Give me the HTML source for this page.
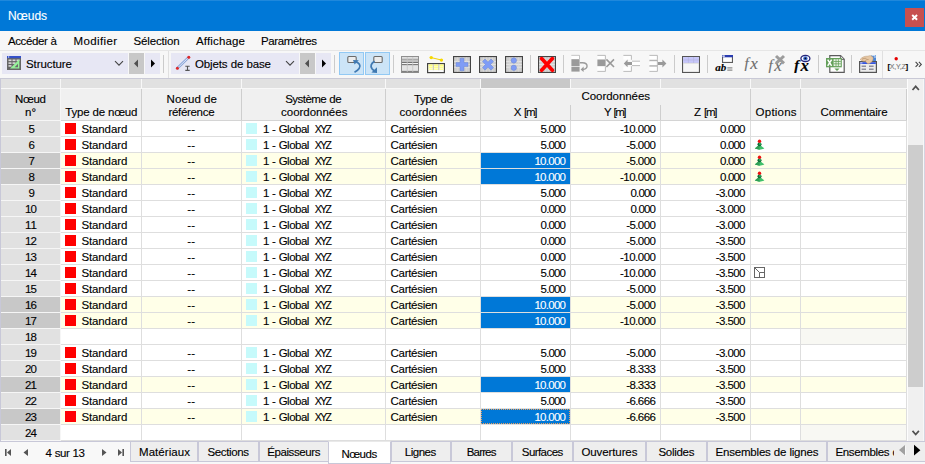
<!DOCTYPE html>
<html lang="fr"><head><meta charset="utf-8"><title>Nœuds</title>
<style>
html,body{margin:0;padding:0}
body{width:925px;height:464px;position:relative;overflow:hidden;background:#f0f0f0;font-family:"Liberation Sans",sans-serif;font-size:11.5px;color:#000}
.r{position:absolute;display:block}
.t{position:absolute;white-space:nowrap;line-height:15px;height:15px;-webkit-text-stroke:0.12px currentColor}
</style></head><body>
<div class="r" style="left:0px;top:0px;width:925px;height:31px;background:#0078d7"></div>
<div class="r" style="left:0px;top:0px;width:925px;height:1px;background:#1f88dc"></div>
<span class="t" style="left:8.00px;top:8.84px;letter-spacing:-0.078px;color:#fff;font-size:12px">Nœuds</span>
<div class="r" style="left:905px;top:8px;width:19px;height:19px;background:#c75050"></div>
<svg class="r" style="left:911px;top:14px" width="8" height="8" viewBox="0 0 8 8"><path d="M1.2 1 L6.1 5.8 M6.1 1 L1.2 5.8" stroke="#fff" stroke-width="1.9" fill="none"/></svg>
<div class="r" style="left:0px;top:31px;width:925px;height:19px;background:#f7f7f7"></div>
<span class="t" style="left:8.00px;top:33.52px;letter-spacing:-0.402px;word-spacing:0.402px">Accéder à</span>
<span class="t" style="left:73.60px;top:33.52px;letter-spacing:0.361px">Modifier</span>
<span class="t" style="left:133.60px;top:33.52px;letter-spacing:-0.164px">Sélection</span>
<span class="t" style="left:196.00px;top:33.52px;letter-spacing:0.156px">Affichage</span>
<span class="t" style="left:261.00px;top:33.52px;letter-spacing:-0.382px">Paramètres</span>
<div class="r" style="left:0px;top:50px;width:925px;height:1px;background:#e6e6e6"></div>
<div class="r" style="left:0px;top:51px;width:925px;height:27px;background:#f7f7f7"></div>
<div class="r" style="left:0px;top:78px;width:925px;height:1px;background:#c9c9d6"></div>
<div class="r" style="left:168px;top:51px;width:1px;height:27px;background:#e0e0e0"></div>
<div class="r" style="left:882px;top:51px;width:1px;height:27px;background:#e0e0e0"></div>
<div class="r" style="left:2px;top:53px;width:126px;height:21px;background:#e7e7f4"></div>
<div class="r" style="left:129px;top:53px;width:15px;height:21px;background:#c8c8c8"></div>
<div class="r" style="left:145px;top:53px;width:15px;height:21px;background:#e7e7f4"></div>
<svg class="r" style="left:114px;top:60px" width="10" height="7" viewBox="0 0 10 7"><path d="M1 1.2 L5 5.2 L9 1.2" stroke="#444" stroke-width="1.1" fill="none"/></svg>
<svg class="r" style="left:133px;top:59px" width="6" height="9" viewBox="0 0 6 9"><path d="M5 0.5 L1 4.5 L5 8.5 Z" fill="#505050"/></svg>
<svg class="r" style="left:150px;top:59px" width="6" height="9" viewBox="0 0 6 9"><path d="M1 0.5 L5 4.5 L1 8.5 Z" fill="#000"/></svg>
<div class="r" style="left:171px;top:53px;width:128px;height:21px;background:#e7e7f4"></div>
<div class="r" style="left:300px;top:53px;width:15px;height:21px;background:#c8c8c8"></div>
<div class="r" style="left:316px;top:53px;width:15px;height:21px;background:#e7e7f4"></div>
<svg class="r" style="left:285px;top:60px" width="10" height="7" viewBox="0 0 10 7"><path d="M1 1.2 L5 5.2 L9 1.2" stroke="#444" stroke-width="1.1" fill="none"/></svg>
<svg class="r" style="left:304px;top:59px" width="6" height="9" viewBox="0 0 6 9"><path d="M5 0.5 L1 4.5 L5 8.5 Z" fill="#505050"/></svg>
<svg class="r" style="left:321px;top:59px" width="6" height="9" viewBox="0 0 6 9"><path d="M1 0.5 L5 4.5 L1 8.5 Z" fill="#000"/></svg>
<span class="t" style="left:26.00px;top:56.52px;letter-spacing:-0.086px">Structure</span>
<span class="t" style="left:195.00px;top:56.52px;letter-spacing:-0.125px;word-spacing:0.125px">Objets de base</span>
<div class="r" style="left:163px;top:55px;width:1px;height:18px;background:#cbcbcb"></div>
<div class="r" style="left:334px;top:55px;width:1px;height:18px;background:#cbcbcb"></div>
<div class="r" style="left:393px;top:55px;width:1px;height:18px;background:#cbcbcb"></div>
<div class="r" style="left:530px;top:55px;width:1px;height:18px;background:#cbcbcb"></div>
<div class="r" style="left:563px;top:55px;width:1px;height:18px;background:#cbcbcb"></div>
<div class="r" style="left:674px;top:55px;width:1px;height:18px;background:#cbcbcb"></div>
<div class="r" style="left:707px;top:55px;width:1px;height:18px;background:#cbcbcb"></div>
<div class="r" style="left:818px;top:55px;width:1px;height:18px;background:#cbcbcb"></div>
<div class="r" style="left:851px;top:55px;width:1px;height:18px;background:#cbcbcb"></div>
<svg class="r" style="left:7px;top:56px" width="14" height="14" viewBox="0 0 14 14"><rect x="0" y="0" width="14" height="14" fill="#666"/><rect x="0" y="0" width="14" height="2.2" fill="#3450c8"/><rect x="1" y="0.4" width="1.2" height="1.2" fill="#dfe4f8"/><g fill="#d8d8d8"><rect x="1.5" y="3.5" width="3" height="1.6"/><rect x="5.5" y="3.5" width="3" height="1.6"/><rect x="9.5" y="3.5" width="3" height="1.6"/><rect x="1.5" y="6.3" width="3" height="1.6"/><rect x="5.5" y="6.3" width="3" height="1.6"/><rect x="1.5" y="9.1" width="3" height="1.6"/></g><path d="M12.4 3.2 L12.4 12.6 L3 12.6 Z" fill="#96f29a"/><path d="M11 7.8 L11 11.3 L7.6 11.3 Z" fill="#6c6c6c"/></svg>
<svg class="r" style="left:175px;top:55px" width="18" height="17" viewBox="0 0 18 17"><path d="M2.6 13 L13.6 2.4" stroke="#8aa4d8" stroke-width="2.6" stroke-linecap="round"/><path d="M2.6 13 L13.6 2.4" stroke="#dfe8f8" stroke-width="1" stroke-linecap="round"/><circle cx="2.4" cy="13.2" r="1.5" fill="#e02828"/><circle cx="13.8" cy="2.3" r="1.5" fill="#e02828"/><path d="M10.3 11.3 H14.7 M10.3 15.4 H14.7 M12.5 11.3 V15.4" stroke="#555" stroke-width="1.1" fill="none"/></svg>
<div class="r" style="left:339px;top:52px;width:25px;height:23px;box-sizing:border-box;background:#cce4f7;border:1px solid #92c9f4"></div>
<div class="r" style="left:365px;top:52px;width:25px;height:23px;box-sizing:border-box;background:#cce4f7;border:1px solid #92c9f4"></div>
<svg class="r" style="left:339px;top:52px" width="25" height="23" viewBox="0 0 25 23"><rect x="8.8" y="4.5" width="8.4" height="6" rx="1" fill="#ececec" stroke="#6a6a6a" stroke-width="1.1"/><path d="M15.5 20.3 C19.5 18.2 22.2 15 20.4 12.2 C19.5 10.8 18 10 16.6 9.6" stroke="#3f79b2" stroke-width="1.7" fill="none"/><path d="M14 8 L19.8 8.2 L15.6 12.6 Z" fill="#3f79b2"/></svg>
<svg class="r" style="left:365px;top:52px" width="25" height="23" viewBox="0 0 25 23"><rect x="8.8" y="4.5" width="8.4" height="6" rx="1" fill="#ececec" stroke="#6a6a6a" stroke-width="1.1"/><path d="M9.6 9.3 C6.2 11.2 5 14 7 16.8 C7.6 17.6 8.4 18.4 9.4 19" stroke="#3f79b2" stroke-width="1.8" fill="none"/><path d="M12 15.2 L12 21 L6.4 20.6 Z" fill="#3f79b2"/></svg>
<svg class="r" style="left:401px;top:56px" width="18" height="17" viewBox="0 0 18 17"><rect x="0" y="0" width="18" height="17" fill="#c4c4c4"/><rect x="0.5" y="0.5" width="17" height="16" fill="none" stroke="#8e8e8e" stroke-width="1"/><rect x="1" y="1" width="4.8" height="1.8" fill="#dedede"/><rect x="1" y="2.8" width="4.8" height="1.8" fill="#a8a8a8"/><rect x="1" y="4.6" width="4.8" height="1.2" fill="#d8d8d8"/><rect x="1" y="5.8" width="4.8" height="1.2" fill="#727272"/><rect x="1" y="7" width="4.8" height="1.1" fill="#f4f4f4"/><rect x="1" y="8.1" width="4.8" height="1.2" fill="#727272"/><rect x="1" y="9.3" width="4.8" height="5.6" fill="#e4e4e4"/><rect x="1" y="14.9" width="4.8" height="1.3" fill="#808080"/><rect x="6.6" y="1" width="4.8" height="1.8" fill="#dedede"/><rect x="6.6" y="2.8" width="4.8" height="1.8" fill="#a8a8a8"/><rect x="6.6" y="4.6" width="4.8" height="1.2" fill="#d8d8d8"/><rect x="6.6" y="5.8" width="4.8" height="1.2" fill="#727272"/><rect x="6.6" y="7" width="4.8" height="1.1" fill="#f4f4f4"/><rect x="6.6" y="8.1" width="4.8" height="1.2" fill="#727272"/><rect x="6.6" y="9.3" width="4.8" height="5.6" fill="#e4e4e4"/><rect x="6.6" y="14.9" width="4.8" height="1.3" fill="#808080"/><rect x="12.2" y="1" width="4.8" height="1.8" fill="#dedede"/><rect x="12.2" y="2.8" width="4.8" height="1.8" fill="#a8a8a8"/><rect x="12.2" y="4.6" width="4.8" height="1.2" fill="#d8d8d8"/><rect x="12.2" y="5.8" width="4.8" height="1.2" fill="#727272"/><rect x="12.2" y="7" width="4.8" height="1.1" fill="#f4f4f4"/><rect x="12.2" y="8.1" width="4.8" height="1.2" fill="#727272"/><rect x="12.2" y="9.3" width="4.8" height="5.6" fill="#e4e4e4"/><rect x="12.2" y="14.9" width="4.8" height="1.3" fill="#808080"/></svg>
<svg class="r" style="left:427px;top:55px" width="18" height="19" viewBox="0 0 18 19"><path d="M4.2 2.6 L14.4 5" stroke="#f2d200" stroke-width="1"/><circle cx="4.2" cy="2.6" r="1.7" fill="#f6d800"/><circle cx="14.4" cy="5.1" r="1.7" fill="#f6d800"/><rect x="0.6" y="8.6" width="16.8" height="9" fill="#fafafa" stroke="#444" stroke-width="1.2"/><rect x="1.6" y="9.5" width="4" height="1.4" fill="#ffff70"/><rect x="1.6" y="11.4" width="4" height="1.6" fill="#ffff8c"/><rect x="1.6" y="13.4" width="4" height="1.6" fill="#ffffa0"/><rect x="7.1" y="9.5" width="4" height="1.4" fill="#ffff70"/><rect x="7.1" y="11.4" width="4" height="1.6" fill="#ffff8c"/><rect x="7.1" y="13.4" width="4" height="1.6" fill="#ffffa0"/><rect x="12.6" y="9.5" width="4" height="1.4" fill="#ffff70"/><rect x="12.6" y="11.4" width="4" height="1.6" fill="#ffff8c"/><rect x="12.6" y="13.4" width="4" height="1.6" fill="#ffffa0"/><path d="M6.3 9.4 V15.2 M11.8 9.4 V15.2" stroke="#b8b8a0" stroke-width="0.8"/></svg>
<svg class="r" style="left:453px;top:56px" width="18" height="17" viewBox="0 0 18 17"><rect x="0.55" y="0.55" width="16.9" height="15.9" fill="#cfcfcf" stroke="#444" stroke-width="1.1"/><path d="M1.2 5.6 H16.8 M1.2 8.4 H16.8 M1.2 11.2 H16.8" stroke="#e6e6e6" stroke-width="0.9"/><path d="M4.5 1.2 V15.8 M7.5 1.2 V15.8 M10.5 1.2 V15.8 M13.5 1.2 V15.8" stroke="#dadada" stroke-width="0.6"/><path d="M7 2.2 H11 V6.6 H15 V10.6 H11 V14.8 H7 V10.6 H3 V6.6 H7 Z" fill="#7f9cf6" stroke="#6d86cc" stroke-width="0.5"/></svg>
<svg class="r" style="left:479px;top:56px" width="18" height="17" viewBox="0 0 18 17"><rect x="0.55" y="0.55" width="16.9" height="15.9" fill="#cfcfcf" stroke="#444" stroke-width="1.1"/><path d="M1.2 5.6 H16.8 M1.2 8.4 H16.8 M1.2 11.2 H16.8" stroke="#e6e6e6" stroke-width="0.9"/><path d="M4.5 1.2 V15.8 M7.5 1.2 V15.8 M10.5 1.2 V15.8 M13.5 1.2 V15.8" stroke="#dadada" stroke-width="0.6"/><path d="M9 6.1 L12 3 L14.6 5.6 L11.6 8.6 L14.6 11.6 L12 14.2 L9 11.2 L6 14.2 L3.4 11.6 L6.4 8.6 L3.4 5.6 L6 3 Z" fill="#7f9cf6" stroke="#6d86cc" stroke-width="0.5"/></svg>
<svg class="r" style="left:505px;top:56px" width="18" height="17" viewBox="0 0 18 17"><rect x="0.55" y="0.55" width="16.9" height="15.9" fill="#cfcfcf" stroke="#444" stroke-width="1.1"/><path d="M1.2 5.6 H16.8 M1.2 8.4 H16.8 M1.2 11.2 H16.8" stroke="#e6e6e6" stroke-width="0.9"/><path d="M4.5 1.2 V15.8 M7.5 1.2 V15.8 M10.5 1.2 V15.8 M13.5 1.2 V15.8" stroke="#dadada" stroke-width="0.6"/><circle cx="8.8" cy="4.5" r="2.7" fill="#7f9cf6" stroke="#6d86cc" stroke-width="0.5"/><circle cx="8.8" cy="11.8" r="2.7" fill="#7f9cf6" stroke="#6d86cc" stroke-width="0.5"/></svg>
<svg class="r" style="left:538px;top:56px" width="18" height="17" viewBox="0 0 18 17"><rect x="0.55" y="0.55" width="16.9" height="15.9" fill="#cfcfcf" stroke="#444" stroke-width="1.1"/><path d="M1.2 5.6 H16.8 M1.2 8.4 H16.8 M1.2 11.2 H16.8" stroke="#e6e6e6" stroke-width="0.9"/><path d="M4.5 1.2 V15.8 M7.5 1.2 V15.8 M10.5 1.2 V15.8 M13.5 1.2 V15.8" stroke="#dadada" stroke-width="0.6"/><path d="M3.6 2.6 L14.4 14.2 M14.4 2.6 L3.6 14.2" stroke="#ff0000" stroke-width="3.7" stroke-linecap="round"/></svg>
<svg class="r" style="left:571px;top:54px" width="18" height="19" viewBox="0 0 18 19"><path d="M0.4 1.4 H8.4 V5" stroke="#b4b4b4" fill="#fff" stroke-width="0.9"/><rect x="0.4" y="1.8" width="7.6" height="3.4" fill="#fff"/><rect x="0.4" y="5.2" width="8.2" height="7" fill="#9a9a9a"/><rect x="0.4" y="12.9" width="8.2" height="4.7" fill="#9a9a9a"/><path d="M8.8 8.7 H11.5 C17.5 8.7 17.5 15.4 12 15.4" stroke="#9a9a9a" stroke-width="1.4" fill="none"/><path d="M12.6 12.6 L9.6 15.4 L12.6 18 Z" fill="#9a9a9a"/></svg>
<svg class="r" style="left:597px;top:54px" width="18" height="19" viewBox="0 0 18 19"><rect x="0.4" y="1.8" width="7.8" height="3.6" fill="#fff"/><path d="M0.4 1.4 H8.4 V5.4" stroke="#b4b4b4" fill="none" stroke-width="0.9"/><rect x="0.4" y="5.5" width="8.2" height="6.6" fill="#9a9a9a"/><rect x="0.4" y="12.8" width="7.8" height="4.2" fill="#fff"/><path d="M8.4 12.4 V17.4 H0.4" stroke="#b4b4b4" fill="none" stroke-width="0.9"/><path d="M9.4 5.4 L17 13 M17 5.4 L9.4 13" stroke="#9a9a9a" stroke-width="1.6"/></svg>
<svg class="r" style="left:623px;top:54px" width="18" height="19" viewBox="0 0 18 19"><rect x="0.4" y="1.8" width="7.8" height="3.8" fill="#fff"/><path d="M0.4 1.4 H8.4 V5.8" stroke="#b4b4b4" fill="none" stroke-width="0.9"/><rect x="0.4" y="12.6" width="7.8" height="4.4" fill="#fff"/><path d="M8.4 12.2 V17.4 H0.4" stroke="#b4b4b4" fill="none" stroke-width="0.9"/><rect x="9" y="7.4" width="8" height="4" fill="#fff"/><path d="M9 7.2 H17 M9 11.6 H17" stroke="#b4b4b4" stroke-width="0.9"/><path d="M0.8 9.4 L4.6 5.6 V7.9 H9 V10.9 H4.6 V13.2 Z" fill="#9a9a9a"/></svg>
<svg class="r" style="left:649px;top:54px" width="18" height="19" viewBox="0 0 18 19"><rect x="0.4" y="1.8" width="7.8" height="3.6" fill="#fff"/><path d="M0.4 1.4 H8.4 V5.4" stroke="#b4b4b4" fill="none" stroke-width="0.9"/><rect x="0.4" y="5.8" width="8" height="1.6" fill="#b4b4b4"/><rect x="0.4" y="7.4" width="8" height="3.8" fill="#fff"/><rect x="0.4" y="11.2" width="8" height="1.6" fill="#b4b4b4"/><rect x="0.4" y="12.8" width="7.8" height="4.2" fill="#fff"/><path d="M8.4 12.8 V17.4 H0.4 M8.4 5.4 V12.8" stroke="#b4b4b4" fill="none" stroke-width="0.9"/><path d="M17.4 9.4 L13.4 5.4 V7.9 H9 V10.9 H13.4 V13.4 Z" fill="#9a9a9a"/></svg>
<svg class="r" style="left:682px;top:56px" width="18" height="17" viewBox="0 0 18 17"><rect x="0.55" y="0.55" width="16.9" height="15.9" fill="#f6f6f6" stroke="#555" stroke-width="1.1"/><rect x="1.1" y="1.1" width="15.8" height="5.9" fill="#c6c6fb"/><path d="M1.1 4 H16.9 M6.4 1.1 V7 M11.6 1.1 V7" stroke="#b4b4e0" stroke-width="0.7"/><path d="M1.1 7.2 H16.9" stroke="#c8c8c8" stroke-width="0.6"/></svg>
<svg class="r" style="left:722px;top:55px" width="11" height="8" viewBox="0 0 11 8"><rect x="0.5" y="0.5" width="10" height="7" fill="#fff" stroke="#5c5c5c" stroke-width="1.2"/><rect x="0" y="0" width="11" height="2.3" fill="#2a3cb0"/><rect x="0.4" y="0.3" width="2.4" height="1.7" fill="#c8cce8"/></svg>
<span class="t" style="left:715.3px;top:60.4px;font:italic bold 11px 'Liberation Serif',serif;letter-spacing:0px;line-height:15px">ab</span>
<svg class="r" style="left:727px;top:67px" width="6" height="4" viewBox="0 0 6 4"><path d="M0.3 0.9 H5.4 M0.3 3.1 H5.4" stroke="#8c8c8c" stroke-width="1.1"/></svg>
<span class="t" style="left:744.4px;top:53.13px;font:italic 15px 'Liberation Serif',serif;color:#6c6c6c;line-height:20px;height:20px">f</span><span class="t" style="left:750.3px;top:53.80px;font:italic 17px 'Liberation Serif',serif;color:#6c6c6c;line-height:20px;height:20px">x</span>
<span class="t" style="left:768.4px;top:55.03px;font:italic 15px 'Liberation Serif',serif;color:#6c6c6c;line-height:20px;height:20px">f</span><span class="t" style="left:774.3px;top:55.70px;font:italic 17px 'Liberation Serif',serif;color:#6c6c6c;line-height:20px;height:20px">x</span>
<svg class="r" style="left:774px;top:54px" width="12" height="11" viewBox="0 0 12 11"><path d="M2 2 L10 9.4 M10 2 L2 9.4" stroke="#9c9c9c" stroke-width="3"/></svg>
<span class="t" style="left:794.3px;top:55.03px;font:italic bold 15px 'Liberation Serif',serif;color:#000;line-height:20px;height:20px">f</span><span class="t" style="left:800.6px;top:55.70px;font:italic bold 17px 'Liberation Serif',serif;color:#000;line-height:20px;height:20px">x</span>
<svg class="r" style="left:800px;top:54px" width="11" height="9" viewBox="0 0 11 9"><ellipse cx="5.4" cy="4.5" rx="4.5" ry="3.1" fill="#fff" stroke="#25257a" stroke-width="1.3"/><circle cx="5.4" cy="4.4" r="2.2" fill="#3a6cd0"/><circle cx="5.4" cy="4.4" r="0.9" fill="#05051a"/></svg>
<svg class="r" style="left:826px;top:55px" width="19" height="18" viewBox="0 0 19 18"><path d="M3.8 0.6 H14.6 L18.2 4.2 V17.4 H3.8 Z" fill="#fdfdfd" stroke="#5a5a5a" stroke-width="1.2"/><path d="M14.4 0.8 V4.4 H18" stroke="#5a5a5a" stroke-width="0.9" fill="#e4e4e4"/><rect x="0" y="3" width="15.8" height="9.3" fill="#64a05a"/><path d="M1.7 4.6 L5.6 10.8 M5.6 4.6 L1.7 10.8" stroke="#fff" stroke-width="1.5"/><rect x="7.6" y="4.2" width="7.2" height="6.9" fill="#e8f2e4"/><path d="M7.6 6.5 H14.8 M7.6 8.8 H14.8 M10 4.2 V11.1 M12.4 4.2 V11.1" stroke="#64a05a" stroke-width="0.8"/><path d="M8.4 13.4 H13.6 L11 16 Z" fill="#64a05a"/></svg>
<svg class="r" style="left:859px;top:54px" width="19" height="19" viewBox="0 0 19 19"><path d="M12 1.2 H17 V8 H12 Z" fill="#4a86d8"/><path d="M12.4 1.6 H16 V4" stroke="#cfe0f6" stroke-width="1" fill="none"/><rect x="0.6" y="7.6" width="16.8" height="10.8" fill="#ececec" stroke="#555" stroke-width="1.2"/><rect x="1.2" y="8.2" width="15.6" height="1.8" fill="#3454e0"/><rect x="1.4" y="8.4" width="2" height="1" fill="#e8e8f8"/><path d="M2.6 12.3 H7 M2.6 15.2 H7 M10 12.3 H14.6 M10 15.2 H14.6" stroke="#8f8f9c" stroke-width="1.4"/><path d="M1.2 5.4 C3 3 6 2 9 2.2 C10.6 1.2 12.8 1.6 14 3.2 C14.6 5.2 13.6 7.6 11.6 8.8 C10.2 9.8 8.8 10 8 9.2 L6.6 7.2 C4.6 7.4 2.6 7 1.2 5.4 Z" fill="#e6c7a4" stroke="#b8926a" stroke-width="0.5"/><path d="M3 5.2 C4.6 4.4 6 4.2 7.4 4.4 M6.4 6.4 C7.4 5.6 8.6 5.4 9.6 5.6" stroke="#a88058" stroke-width="0.6" fill="none"/></svg>
<svg class="r" style="left:893px;top:56px" width="6" height="6" viewBox="0 0 6 6"><circle cx="3.2" cy="2.8" r="1.7" fill="#e60000"/></svg>
<span class="t" style="left:887.4px;top:59.9px;font-size:7px;line-height:14px;letter-spacing:-0.2px;color:#777"><b style="color:#000;font-size:8px">[</b>X,Y,Z<b style="color:#000;font-size:8px">]</b></span>
<svg class="r" style="left:915px;top:61px" width="8" height="7" viewBox="0 0 8 7"><path d="M0.6 0.9 L3 3.4 L0.6 5.9 M3.9 0.9 L6.3 3.4 L3.9 5.9" stroke="#444" stroke-width="1.1" fill="none"/></svg>
<div class="r" style="left:0px;top:79px;width:925px;height:362px;background:#fff"></div>
<div class="r" style="left:0px;top:79px;width:1px;height:362px;background:#c8c8d8"></div>
<div class="r" style="left:1px;top:79px;width:59px;height:9px;background:#e1e1e1"></div>
<div class="r" style="left:61px;top:79px;width:80px;height:9px;background:#e1e1e1"></div>
<div class="r" style="left:142px;top:79px;width:99px;height:9px;background:#e1e1e1"></div>
<div class="r" style="left:242px;top:79px;width:143px;height:9px;background:#e1e1e1"></div>
<div class="r" style="left:386px;top:79px;width:94px;height:9px;background:#e1e1e1"></div>
<div class="r" style="left:481px;top:79px;width:89px;height:9px;background:#c8c8c8"></div>
<div class="r" style="left:571px;top:79px;width:89px;height:9px;background:#e1e1e1"></div>
<div class="r" style="left:661px;top:79px;width:89px;height:9px;background:#e1e1e1"></div>
<div class="r" style="left:751px;top:79px;width:49px;height:9px;background:#e1e1e1"></div>
<div class="r" style="left:801px;top:79px;width:106px;height:9px;background:#e1e1e1"></div>
<div class="r" style="left:1px;top:89px;width:59px;height:31px;background:#e1e1e1"></div>
<div class="r" style="left:61px;top:89px;width:845px;height:31px;background:#f0f0f0"></div>
<span class="t" style="left:15.00px;top:92.02px;letter-spacing:-0.312px">Nœud</span>
<span class="t" style="left:25.00px;top:105.02px;letter-spacing:0.000px">n°</span>
<span class="t" style="left:65.30px;top:105.02px;letter-spacing:-0.225px;word-spacing:0.225px">Type de nœud</span>
<span class="t" style="left:166.50px;top:92.02px;letter-spacing:0.104px;word-spacing:-0.104px">Noeud de</span>
<span class="t" style="left:168.50px;top:105.02px;letter-spacing:-0.320px">référence</span>
<span class="t" style="left:285.20px;top:92.02px;letter-spacing:-0.544px;word-spacing:0.544px">Système de</span>
<span class="t" style="left:281.00px;top:105.02px;letter-spacing:-0.010px">coordonnées</span>
<span class="t" style="left:414.00px;top:92.02px;letter-spacing:-0.408px;word-spacing:0.408px">Type de</span>
<span class="t" style="left:399.40px;top:105.02px;letter-spacing:0.080px">coordonnées</span>
<span class="t" style="left:581.50px;top:89.02px;letter-spacing:-0.056px">Coordonnées</span>
<span class="t" style="left:513.80px;top:105.02px;letter-spacing:0.000px">X</span>
<span class="t" style="left:524.00px;top:105.02px;letter-spacing:-1.300px">[m]</span>
<span class="t" style="left:603.90px;top:105.02px;letter-spacing:0.000px">Y</span>
<span class="t" style="left:613.60px;top:105.02px;letter-spacing:-1.550px">[m]</span>
<span class="t" style="left:694.00px;top:105.02px;letter-spacing:0.000px">Z</span>
<span class="t" style="left:704.00px;top:105.02px;letter-spacing:-1.250px">[m]</span>
<span class="t" style="left:755.60px;top:105.02px;letter-spacing:0.229px">Options</span>
<span class="t" style="left:820.60px;top:105.02px;letter-spacing:-0.200px">Commentaire</span>
<div class="r" style="left:1px;top:121px;width:59px;height:15px;background:#e1e1e1"></div>
<div class="r" style="left:61px;top:136px;width:845px;height:1px;background:#dedede"></div>
<span class="t" style="left:28.40px;top:121.52px;letter-spacing:0.000px">5</span>
<div class="r" style="left:65px;top:123px;width:11px;height:11px;background:#ff0000"></div>
<span class="t" style="left:81.40px;top:121.52px;letter-spacing:-0.113px">Standard</span>
<span class="t" style="left:187.30px;top:121.52px;letter-spacing:0.012px">--</span>
<div class="r" style="left:246px;top:123px;width:11px;height:11px;background:#c6fafb"></div>
<span class="t" style="left:262.90px;top:121.52px;letter-spacing:0.000px">1</span>
<span class="t" style="left:271.90px;top:121.52px;letter-spacing:0.000px">-</span>
<span class="t" style="left:278.70px;top:121.52px;letter-spacing:-0.510px">Global</span>
<span class="t" style="left:314.80px;top:121.86px;letter-spacing:-1.619px;font-size:10.5px">XYZ</span>
<span class="t" style="left:390.50px;top:121.52px;letter-spacing:-0.286px">Cartésien</span>
<span class="t" style="left:540.60px;top:121.52px;letter-spacing:-0.838px">5.000</span>
<span class="t" style="left:620.00px;top:121.52px;letter-spacing:-0.517px">-10.000</span>
<span class="t" style="left:720.10px;top:121.52px;letter-spacing:-0.838px">0.000</span>
<div class="r" style="left:1px;top:137px;width:59px;height:15px;background:#e1e1e1"></div>
<div class="r" style="left:61px;top:152px;width:845px;height:1px;background:#dedede"></div>
<span class="t" style="left:28.40px;top:137.52px;letter-spacing:0.000px">6</span>
<div class="r" style="left:65px;top:139px;width:11px;height:11px;background:#ff0000"></div>
<span class="t" style="left:81.40px;top:137.52px;letter-spacing:-0.113px">Standard</span>
<span class="t" style="left:187.30px;top:137.52px;letter-spacing:0.012px">--</span>
<div class="r" style="left:246px;top:139px;width:11px;height:11px;background:#c6fafb"></div>
<span class="t" style="left:262.90px;top:137.52px;letter-spacing:0.000px">1</span>
<span class="t" style="left:271.90px;top:137.52px;letter-spacing:0.000px">-</span>
<span class="t" style="left:278.70px;top:137.52px;letter-spacing:-0.510px">Global</span>
<span class="t" style="left:314.80px;top:137.86px;letter-spacing:-1.619px;font-size:10.5px">XYZ</span>
<span class="t" style="left:390.50px;top:137.52px;letter-spacing:-0.286px">Cartésien</span>
<span class="t" style="left:540.60px;top:137.52px;letter-spacing:-0.838px">5.000</span>
<span class="t" style="left:626.20px;top:137.52px;letter-spacing:-0.585px">-5.000</span>
<span class="t" style="left:720.10px;top:137.52px;letter-spacing:-0.838px">0.000</span>
<svg class="r" style="left:754px;top:139px" width="12" height="13" viewBox="0 0 12 13"><path d="M5.5 5.4 L10.4 9.6 L5.6 10.8 L0.8 9.6 Z" fill="#3fc06a"/><path d="M5.5 5.4 L5.6 10.8 L0.8 9.6 Z" fill="#2f9e56"/><circle cx="5.5" cy="5.2" r="2" fill="#0f6a38"/><circle cx="6" cy="4.9" r="0.8" fill="#3fd070"/><circle cx="5.5" cy="2.2" r="1.7" fill="#f01010"/></svg>
<div class="r" style="left:1px;top:153px;width:59px;height:15px;background:#c8c8c8"></div>
<div class="r" style="left:61px;top:153px;width:845px;height:15px;background:#ffffe8"></div>
<div class="r" style="left:61px;top:168px;width:845px;height:1px;background:#dedede"></div>
<span class="t" style="left:28.40px;top:153.52px;letter-spacing:0.000px">7</span>
<div class="r" style="left:65px;top:155px;width:11px;height:11px;background:#ff0000"></div>
<span class="t" style="left:81.40px;top:153.52px;letter-spacing:-0.113px">Standard</span>
<span class="t" style="left:187.30px;top:153.52px;letter-spacing:0.012px">--</span>
<div class="r" style="left:246px;top:155px;width:11px;height:11px;background:#c6fafb"></div>
<span class="t" style="left:262.90px;top:153.52px;letter-spacing:0.000px">1</span>
<span class="t" style="left:271.90px;top:153.52px;letter-spacing:0.000px">-</span>
<span class="t" style="left:278.70px;top:153.52px;letter-spacing:-0.510px">Global</span>
<span class="t" style="left:314.80px;top:153.86px;letter-spacing:-1.619px;font-size:10.5px">XYZ</span>
<span class="t" style="left:390.50px;top:153.52px;letter-spacing:-0.286px">Cartésien</span>
<div class="r" style="left:481px;top:153px;width:89px;height:15px;background:#0078d7"></div>
<span class="t" style="left:534.40px;top:153.52px;letter-spacing:-0.717px;color:#fff">10.000</span>
<span class="t" style="left:626.20px;top:153.52px;letter-spacing:-0.585px">-5.000</span>
<span class="t" style="left:720.10px;top:153.52px;letter-spacing:-0.838px">0.000</span>
<svg class="r" style="left:754px;top:155px" width="12" height="13" viewBox="0 0 12 13"><path d="M5.5 5.4 L10.4 9.6 L5.6 10.8 L0.8 9.6 Z" fill="#3fc06a"/><path d="M5.5 5.4 L5.6 10.8 L0.8 9.6 Z" fill="#2f9e56"/><circle cx="5.5" cy="5.2" r="2" fill="#0f6a38"/><circle cx="6" cy="4.9" r="0.8" fill="#3fd070"/><circle cx="5.5" cy="2.2" r="1.7" fill="#f01010"/></svg>
<div class="r" style="left:1px;top:169px;width:59px;height:15px;background:#c8c8c8"></div>
<div class="r" style="left:61px;top:169px;width:845px;height:15px;background:#ffffe8"></div>
<div class="r" style="left:61px;top:184px;width:845px;height:1px;background:#dedede"></div>
<span class="t" style="left:28.40px;top:169.52px;letter-spacing:0.000px">8</span>
<div class="r" style="left:65px;top:171px;width:11px;height:11px;background:#ff0000"></div>
<span class="t" style="left:81.40px;top:169.52px;letter-spacing:-0.113px">Standard</span>
<span class="t" style="left:187.30px;top:169.52px;letter-spacing:0.012px">--</span>
<div class="r" style="left:246px;top:171px;width:11px;height:11px;background:#c6fafb"></div>
<span class="t" style="left:262.90px;top:169.52px;letter-spacing:0.000px">1</span>
<span class="t" style="left:271.90px;top:169.52px;letter-spacing:0.000px">-</span>
<span class="t" style="left:278.70px;top:169.52px;letter-spacing:-0.510px">Global</span>
<span class="t" style="left:314.80px;top:169.86px;letter-spacing:-1.619px;font-size:10.5px">XYZ</span>
<span class="t" style="left:390.50px;top:169.52px;letter-spacing:-0.286px">Cartésien</span>
<div class="r" style="left:481px;top:169px;width:89px;height:15px;background:#0078d7"></div>
<span class="t" style="left:534.40px;top:169.52px;letter-spacing:-0.717px;color:#fff">10.000</span>
<span class="t" style="left:620.00px;top:169.52px;letter-spacing:-0.517px">-10.000</span>
<span class="t" style="left:720.10px;top:169.52px;letter-spacing:-0.838px">0.000</span>
<svg class="r" style="left:754px;top:171px" width="12" height="13" viewBox="0 0 12 13"><path d="M5.5 5.4 L10.4 9.6 L5.6 10.8 L0.8 9.6 Z" fill="#3fc06a"/><path d="M5.5 5.4 L5.6 10.8 L0.8 9.6 Z" fill="#2f9e56"/><circle cx="5.5" cy="5.2" r="2" fill="#0f6a38"/><circle cx="6" cy="4.9" r="0.8" fill="#3fd070"/><circle cx="5.5" cy="2.2" r="1.7" fill="#f01010"/></svg>
<div class="r" style="left:1px;top:185px;width:59px;height:15px;background:#e1e1e1"></div>
<div class="r" style="left:61px;top:200px;width:845px;height:1px;background:#dedede"></div>
<span class="t" style="left:28.40px;top:185.52px;letter-spacing:0.000px">9</span>
<div class="r" style="left:65px;top:187px;width:11px;height:11px;background:#ff0000"></div>
<span class="t" style="left:81.40px;top:185.52px;letter-spacing:-0.113px">Standard</span>
<span class="t" style="left:187.30px;top:185.52px;letter-spacing:0.012px">--</span>
<div class="r" style="left:246px;top:187px;width:11px;height:11px;background:#c6fafb"></div>
<span class="t" style="left:262.90px;top:185.52px;letter-spacing:0.000px">1</span>
<span class="t" style="left:271.90px;top:185.52px;letter-spacing:0.000px">-</span>
<span class="t" style="left:278.70px;top:185.52px;letter-spacing:-0.510px">Global</span>
<span class="t" style="left:314.80px;top:185.86px;letter-spacing:-1.619px;font-size:10.5px">XYZ</span>
<span class="t" style="left:390.50px;top:185.52px;letter-spacing:-0.286px">Cartésien</span>
<span class="t" style="left:540.60px;top:185.52px;letter-spacing:-0.838px">5.000</span>
<span class="t" style="left:630.50px;top:185.52px;letter-spacing:-0.838px">0.000</span>
<span class="t" style="left:715.80px;top:185.52px;letter-spacing:-0.585px">-3.000</span>
<div class="r" style="left:1px;top:201px;width:59px;height:15px;background:#e1e1e1"></div>
<div class="r" style="left:61px;top:216px;width:845px;height:1px;background:#dedede"></div>
<span class="t" style="left:25.10px;top:201.52px;letter-spacing:-1.013px">10</span>
<div class="r" style="left:65px;top:203px;width:11px;height:11px;background:#ff0000"></div>
<span class="t" style="left:81.40px;top:201.52px;letter-spacing:-0.113px">Standard</span>
<span class="t" style="left:187.30px;top:201.52px;letter-spacing:0.012px">--</span>
<div class="r" style="left:246px;top:203px;width:11px;height:11px;background:#c6fafb"></div>
<span class="t" style="left:262.90px;top:201.52px;letter-spacing:0.000px">1</span>
<span class="t" style="left:271.90px;top:201.52px;letter-spacing:0.000px">-</span>
<span class="t" style="left:278.70px;top:201.52px;letter-spacing:-0.510px">Global</span>
<span class="t" style="left:314.80px;top:201.86px;letter-spacing:-1.619px;font-size:10.5px">XYZ</span>
<span class="t" style="left:390.50px;top:201.52px;letter-spacing:-0.286px">Cartésien</span>
<span class="t" style="left:540.60px;top:201.52px;letter-spacing:-0.838px">0.000</span>
<span class="t" style="left:630.50px;top:201.52px;letter-spacing:-0.838px">0.000</span>
<span class="t" style="left:715.80px;top:201.52px;letter-spacing:-0.585px">-3.000</span>
<div class="r" style="left:1px;top:217px;width:59px;height:15px;background:#e1e1e1"></div>
<div class="r" style="left:61px;top:232px;width:845px;height:1px;background:#dedede"></div>
<span class="t" style="left:25.10px;top:217.52px;letter-spacing:-0.138px">11</span>
<div class="r" style="left:65px;top:219px;width:11px;height:11px;background:#ff0000"></div>
<span class="t" style="left:81.40px;top:217.52px;letter-spacing:-0.113px">Standard</span>
<span class="t" style="left:187.30px;top:217.52px;letter-spacing:0.012px">--</span>
<div class="r" style="left:246px;top:219px;width:11px;height:11px;background:#c6fafb"></div>
<span class="t" style="left:262.90px;top:217.52px;letter-spacing:0.000px">1</span>
<span class="t" style="left:271.90px;top:217.52px;letter-spacing:0.000px">-</span>
<span class="t" style="left:278.70px;top:217.52px;letter-spacing:-0.510px">Global</span>
<span class="t" style="left:314.80px;top:217.86px;letter-spacing:-1.619px;font-size:10.5px">XYZ</span>
<span class="t" style="left:390.50px;top:217.52px;letter-spacing:-0.286px">Cartésien</span>
<span class="t" style="left:540.60px;top:217.52px;letter-spacing:-0.838px">0.000</span>
<span class="t" style="left:626.20px;top:217.52px;letter-spacing:-0.585px">-5.000</span>
<span class="t" style="left:715.80px;top:217.52px;letter-spacing:-0.585px">-3.000</span>
<div class="r" style="left:1px;top:233px;width:59px;height:15px;background:#e1e1e1"></div>
<div class="r" style="left:61px;top:248px;width:845px;height:1px;background:#dedede"></div>
<span class="t" style="left:25.10px;top:233.52px;letter-spacing:-1.013px">12</span>
<div class="r" style="left:65px;top:235px;width:11px;height:11px;background:#ff0000"></div>
<span class="t" style="left:81.40px;top:233.52px;letter-spacing:-0.113px">Standard</span>
<span class="t" style="left:187.30px;top:233.52px;letter-spacing:0.012px">--</span>
<div class="r" style="left:246px;top:235px;width:11px;height:11px;background:#c6fafb"></div>
<span class="t" style="left:262.90px;top:233.52px;letter-spacing:0.000px">1</span>
<span class="t" style="left:271.90px;top:233.52px;letter-spacing:0.000px">-</span>
<span class="t" style="left:278.70px;top:233.52px;letter-spacing:-0.510px">Global</span>
<span class="t" style="left:314.80px;top:233.86px;letter-spacing:-1.619px;font-size:10.5px">XYZ</span>
<span class="t" style="left:390.50px;top:233.52px;letter-spacing:-0.286px">Cartésien</span>
<span class="t" style="left:540.60px;top:233.52px;letter-spacing:-0.838px">0.000</span>
<span class="t" style="left:626.20px;top:233.52px;letter-spacing:-0.585px">-5.000</span>
<span class="t" style="left:715.80px;top:233.52px;letter-spacing:-0.585px">-3.500</span>
<div class="r" style="left:1px;top:249px;width:59px;height:15px;background:#e1e1e1"></div>
<div class="r" style="left:61px;top:264px;width:845px;height:1px;background:#dedede"></div>
<span class="t" style="left:25.10px;top:249.52px;letter-spacing:-1.013px">13</span>
<div class="r" style="left:65px;top:251px;width:11px;height:11px;background:#ff0000"></div>
<span class="t" style="left:81.40px;top:249.52px;letter-spacing:-0.113px">Standard</span>
<span class="t" style="left:187.30px;top:249.52px;letter-spacing:0.012px">--</span>
<div class="r" style="left:246px;top:251px;width:11px;height:11px;background:#c6fafb"></div>
<span class="t" style="left:262.90px;top:249.52px;letter-spacing:0.000px">1</span>
<span class="t" style="left:271.90px;top:249.52px;letter-spacing:0.000px">-</span>
<span class="t" style="left:278.70px;top:249.52px;letter-spacing:-0.510px">Global</span>
<span class="t" style="left:314.80px;top:249.86px;letter-spacing:-1.619px;font-size:10.5px">XYZ</span>
<span class="t" style="left:390.50px;top:249.52px;letter-spacing:-0.286px">Cartésien</span>
<span class="t" style="left:540.60px;top:249.52px;letter-spacing:-0.838px">0.000</span>
<span class="t" style="left:620.00px;top:249.52px;letter-spacing:-0.517px">-10.000</span>
<span class="t" style="left:715.80px;top:249.52px;letter-spacing:-0.585px">-3.500</span>
<div class="r" style="left:1px;top:265px;width:59px;height:15px;background:#e1e1e1"></div>
<div class="r" style="left:61px;top:280px;width:845px;height:1px;background:#dedede"></div>
<span class="t" style="left:25.10px;top:265.52px;letter-spacing:-1.013px">14</span>
<div class="r" style="left:65px;top:267px;width:11px;height:11px;background:#ff0000"></div>
<span class="t" style="left:81.40px;top:265.52px;letter-spacing:-0.113px">Standard</span>
<span class="t" style="left:187.30px;top:265.52px;letter-spacing:0.012px">--</span>
<div class="r" style="left:246px;top:267px;width:11px;height:11px;background:#c6fafb"></div>
<span class="t" style="left:262.90px;top:265.52px;letter-spacing:0.000px">1</span>
<span class="t" style="left:271.90px;top:265.52px;letter-spacing:0.000px">-</span>
<span class="t" style="left:278.70px;top:265.52px;letter-spacing:-0.510px">Global</span>
<span class="t" style="left:314.80px;top:265.86px;letter-spacing:-1.619px;font-size:10.5px">XYZ</span>
<span class="t" style="left:390.50px;top:265.52px;letter-spacing:-0.286px">Cartésien</span>
<span class="t" style="left:540.60px;top:265.52px;letter-spacing:-0.838px">5.000</span>
<span class="t" style="left:620.00px;top:265.52px;letter-spacing:-0.517px">-10.000</span>
<span class="t" style="left:715.80px;top:265.52px;letter-spacing:-0.585px">-3.500</span>
<svg class="r" style="left:754px;top:267px" width="11" height="11" viewBox="0 0 11 11"><rect x="0.5" y="0.5" width="10" height="10" fill="#fff" stroke="#666"/><path d="M0.5 0.5 L5.5 5.5 M5.5 10.5 L5.5 5.5 L10.5 5.5" stroke="#666" fill="none"/></svg>
<div class="r" style="left:1px;top:281px;width:59px;height:15px;background:#e1e1e1"></div>
<div class="r" style="left:61px;top:296px;width:845px;height:1px;background:#dedede"></div>
<span class="t" style="left:25.10px;top:281.52px;letter-spacing:-1.013px">15</span>
<div class="r" style="left:65px;top:283px;width:11px;height:11px;background:#ff0000"></div>
<span class="t" style="left:81.40px;top:281.52px;letter-spacing:-0.113px">Standard</span>
<span class="t" style="left:187.30px;top:281.52px;letter-spacing:0.012px">--</span>
<div class="r" style="left:246px;top:283px;width:11px;height:11px;background:#c6fafb"></div>
<span class="t" style="left:262.90px;top:281.52px;letter-spacing:0.000px">1</span>
<span class="t" style="left:271.90px;top:281.52px;letter-spacing:0.000px">-</span>
<span class="t" style="left:278.70px;top:281.52px;letter-spacing:-0.510px">Global</span>
<span class="t" style="left:314.80px;top:281.86px;letter-spacing:-1.619px;font-size:10.5px">XYZ</span>
<span class="t" style="left:390.50px;top:281.52px;letter-spacing:-0.286px">Cartésien</span>
<span class="t" style="left:540.60px;top:281.52px;letter-spacing:-0.838px">5.000</span>
<span class="t" style="left:626.20px;top:281.52px;letter-spacing:-0.585px">-5.000</span>
<span class="t" style="left:715.80px;top:281.52px;letter-spacing:-0.585px">-3.500</span>
<div class="r" style="left:1px;top:297px;width:59px;height:15px;background:#c8c8c8"></div>
<div class="r" style="left:61px;top:297px;width:845px;height:15px;background:#ffffe8"></div>
<div class="r" style="left:61px;top:312px;width:845px;height:1px;background:#dedede"></div>
<span class="t" style="left:25.10px;top:297.52px;letter-spacing:-1.013px">16</span>
<div class="r" style="left:65px;top:299px;width:11px;height:11px;background:#ff0000"></div>
<span class="t" style="left:81.40px;top:297.52px;letter-spacing:-0.113px">Standard</span>
<span class="t" style="left:187.30px;top:297.52px;letter-spacing:0.012px">--</span>
<div class="r" style="left:246px;top:299px;width:11px;height:11px;background:#c6fafb"></div>
<span class="t" style="left:262.90px;top:297.52px;letter-spacing:0.000px">1</span>
<span class="t" style="left:271.90px;top:297.52px;letter-spacing:0.000px">-</span>
<span class="t" style="left:278.70px;top:297.52px;letter-spacing:-0.510px">Global</span>
<span class="t" style="left:314.80px;top:297.86px;letter-spacing:-1.619px;font-size:10.5px">XYZ</span>
<span class="t" style="left:390.50px;top:297.52px;letter-spacing:-0.286px">Cartésien</span>
<div class="r" style="left:481px;top:297px;width:89px;height:15px;background:#0078d7"></div>
<span class="t" style="left:534.40px;top:297.52px;letter-spacing:-0.717px;color:#fff">10.000</span>
<span class="t" style="left:626.20px;top:297.52px;letter-spacing:-0.585px">-5.000</span>
<span class="t" style="left:715.80px;top:297.52px;letter-spacing:-0.585px">-3.500</span>
<div class="r" style="left:1px;top:313px;width:59px;height:15px;background:#c8c8c8"></div>
<div class="r" style="left:61px;top:313px;width:845px;height:15px;background:#ffffe8"></div>
<div class="r" style="left:61px;top:328px;width:845px;height:1px;background:#dedede"></div>
<span class="t" style="left:25.10px;top:313.52px;letter-spacing:-1.013px">17</span>
<div class="r" style="left:65px;top:315px;width:11px;height:11px;background:#ff0000"></div>
<span class="t" style="left:81.40px;top:313.52px;letter-spacing:-0.113px">Standard</span>
<span class="t" style="left:187.30px;top:313.52px;letter-spacing:0.012px">--</span>
<div class="r" style="left:246px;top:315px;width:11px;height:11px;background:#c6fafb"></div>
<span class="t" style="left:262.90px;top:313.52px;letter-spacing:0.000px">1</span>
<span class="t" style="left:271.90px;top:313.52px;letter-spacing:0.000px">-</span>
<span class="t" style="left:278.70px;top:313.52px;letter-spacing:-0.510px">Global</span>
<span class="t" style="left:314.80px;top:313.86px;letter-spacing:-1.619px;font-size:10.5px">XYZ</span>
<span class="t" style="left:390.50px;top:313.52px;letter-spacing:-0.286px">Cartésien</span>
<div class="r" style="left:481px;top:313px;width:89px;height:15px;background:#0078d7"></div>
<span class="t" style="left:534.40px;top:313.52px;letter-spacing:-0.717px;color:#fff">10.000</span>
<span class="t" style="left:620.00px;top:313.52px;letter-spacing:-0.517px">-10.000</span>
<span class="t" style="left:715.80px;top:313.52px;letter-spacing:-0.585px">-3.500</span>
<div class="r" style="left:1px;top:329px;width:59px;height:15px;background:#e1e1e1"></div>
<div class="r" style="left:801px;top:329px;width:105px;height:15px;background:#f8f8f3"></div>
<div class="r" style="left:61px;top:344px;width:845px;height:1px;background:#dedede"></div>
<span class="t" style="left:25.10px;top:329.52px;letter-spacing:-1.013px">18</span>
<div class="r" style="left:1px;top:345px;width:59px;height:15px;background:#e1e1e1"></div>
<div class="r" style="left:61px;top:360px;width:845px;height:1px;background:#dedede"></div>
<span class="t" style="left:25.10px;top:345.52px;letter-spacing:-1.013px">19</span>
<div class="r" style="left:65px;top:347px;width:11px;height:11px;background:#ff0000"></div>
<span class="t" style="left:81.40px;top:345.52px;letter-spacing:-0.113px">Standard</span>
<span class="t" style="left:187.30px;top:345.52px;letter-spacing:0.012px">--</span>
<div class="r" style="left:246px;top:347px;width:11px;height:11px;background:#c6fafb"></div>
<span class="t" style="left:262.90px;top:345.52px;letter-spacing:0.000px">1</span>
<span class="t" style="left:271.90px;top:345.52px;letter-spacing:0.000px">-</span>
<span class="t" style="left:278.70px;top:345.52px;letter-spacing:-0.510px">Global</span>
<span class="t" style="left:314.80px;top:345.86px;letter-spacing:-1.619px;font-size:10.5px">XYZ</span>
<span class="t" style="left:390.50px;top:345.52px;letter-spacing:-0.286px">Cartésien</span>
<span class="t" style="left:540.60px;top:345.52px;letter-spacing:-0.838px">5.000</span>
<span class="t" style="left:626.20px;top:345.52px;letter-spacing:-0.585px">-5.000</span>
<span class="t" style="left:715.80px;top:345.52px;letter-spacing:-0.585px">-3.000</span>
<div class="r" style="left:1px;top:361px;width:59px;height:15px;background:#e1e1e1"></div>
<div class="r" style="left:61px;top:376px;width:845px;height:1px;background:#dedede"></div>
<span class="t" style="left:25.10px;top:361.52px;letter-spacing:-1.013px">20</span>
<div class="r" style="left:65px;top:363px;width:11px;height:11px;background:#ff0000"></div>
<span class="t" style="left:81.40px;top:361.52px;letter-spacing:-0.113px">Standard</span>
<span class="t" style="left:187.30px;top:361.52px;letter-spacing:0.012px">--</span>
<div class="r" style="left:246px;top:363px;width:11px;height:11px;background:#c6fafb"></div>
<span class="t" style="left:262.90px;top:361.52px;letter-spacing:0.000px">1</span>
<span class="t" style="left:271.90px;top:361.52px;letter-spacing:0.000px">-</span>
<span class="t" style="left:278.70px;top:361.52px;letter-spacing:-0.510px">Global</span>
<span class="t" style="left:314.80px;top:361.86px;letter-spacing:-1.619px;font-size:10.5px">XYZ</span>
<span class="t" style="left:390.50px;top:361.52px;letter-spacing:-0.286px">Cartésien</span>
<span class="t" style="left:540.60px;top:361.52px;letter-spacing:-0.838px">5.000</span>
<span class="t" style="left:626.20px;top:361.52px;letter-spacing:-0.585px">-8.333</span>
<span class="t" style="left:715.80px;top:361.52px;letter-spacing:-0.585px">-3.500</span>
<div class="r" style="left:1px;top:377px;width:59px;height:15px;background:#c8c8c8"></div>
<div class="r" style="left:61px;top:377px;width:845px;height:15px;background:#ffffe8"></div>
<div class="r" style="left:61px;top:392px;width:845px;height:1px;background:#dedede"></div>
<span class="t" style="left:25.10px;top:377.52px;letter-spacing:-1.013px">21</span>
<div class="r" style="left:65px;top:379px;width:11px;height:11px;background:#ff0000"></div>
<span class="t" style="left:81.40px;top:377.52px;letter-spacing:-0.113px">Standard</span>
<span class="t" style="left:187.30px;top:377.52px;letter-spacing:0.012px">--</span>
<div class="r" style="left:246px;top:379px;width:11px;height:11px;background:#c6fafb"></div>
<span class="t" style="left:262.90px;top:377.52px;letter-spacing:0.000px">1</span>
<span class="t" style="left:271.90px;top:377.52px;letter-spacing:0.000px">-</span>
<span class="t" style="left:278.70px;top:377.52px;letter-spacing:-0.510px">Global</span>
<span class="t" style="left:314.80px;top:377.86px;letter-spacing:-1.619px;font-size:10.5px">XYZ</span>
<span class="t" style="left:390.50px;top:377.52px;letter-spacing:-0.286px">Cartésien</span>
<div class="r" style="left:481px;top:377px;width:89px;height:15px;background:#0078d7"></div>
<span class="t" style="left:534.40px;top:377.52px;letter-spacing:-0.717px;color:#fff">10.000</span>
<span class="t" style="left:626.20px;top:377.52px;letter-spacing:-0.585px">-8.333</span>
<span class="t" style="left:715.80px;top:377.52px;letter-spacing:-0.585px">-3.500</span>
<div class="r" style="left:1px;top:393px;width:59px;height:15px;background:#e1e1e1"></div>
<div class="r" style="left:61px;top:408px;width:845px;height:1px;background:#dedede"></div>
<span class="t" style="left:25.10px;top:393.52px;letter-spacing:-1.013px">22</span>
<div class="r" style="left:65px;top:395px;width:11px;height:11px;background:#ff0000"></div>
<span class="t" style="left:81.40px;top:393.52px;letter-spacing:-0.113px">Standard</span>
<span class="t" style="left:187.30px;top:393.52px;letter-spacing:0.012px">--</span>
<div class="r" style="left:246px;top:395px;width:11px;height:11px;background:#c6fafb"></div>
<span class="t" style="left:262.90px;top:393.52px;letter-spacing:0.000px">1</span>
<span class="t" style="left:271.90px;top:393.52px;letter-spacing:0.000px">-</span>
<span class="t" style="left:278.70px;top:393.52px;letter-spacing:-0.510px">Global</span>
<span class="t" style="left:314.80px;top:393.86px;letter-spacing:-1.619px;font-size:10.5px">XYZ</span>
<span class="t" style="left:390.50px;top:393.52px;letter-spacing:-0.286px">Cartésien</span>
<span class="t" style="left:540.60px;top:393.52px;letter-spacing:-0.838px">5.000</span>
<span class="t" style="left:626.20px;top:393.52px;letter-spacing:-0.585px">-6.666</span>
<span class="t" style="left:715.80px;top:393.52px;letter-spacing:-0.585px">-3.500</span>
<div class="r" style="left:1px;top:409px;width:59px;height:15px;background:#c8c8c8"></div>
<div class="r" style="left:61px;top:409px;width:845px;height:15px;background:#ffffe8"></div>
<div class="r" style="left:61px;top:424px;width:845px;height:1px;background:#dedede"></div>
<span class="t" style="left:25.10px;top:409.52px;letter-spacing:-1.013px">23</span>
<div class="r" style="left:65px;top:411px;width:11px;height:11px;background:#ff0000"></div>
<span class="t" style="left:81.40px;top:409.52px;letter-spacing:-0.113px">Standard</span>
<span class="t" style="left:187.30px;top:409.52px;letter-spacing:0.012px">--</span>
<div class="r" style="left:246px;top:411px;width:11px;height:11px;background:#c6fafb"></div>
<span class="t" style="left:262.90px;top:409.52px;letter-spacing:0.000px">1</span>
<span class="t" style="left:271.90px;top:409.52px;letter-spacing:0.000px">-</span>
<span class="t" style="left:278.70px;top:409.52px;letter-spacing:-0.510px">Global</span>
<span class="t" style="left:314.80px;top:409.86px;letter-spacing:-1.619px;font-size:10.5px">XYZ</span>
<span class="t" style="left:390.50px;top:409.52px;letter-spacing:-0.286px">Cartésien</span>
<div class="r" style="left:481px;top:409px;width:89px;height:15px;background:#0078d7"></div>
<div class="r" style="left:481px;top:409px;width:87px;height:13px;border:1px dotted #e8a060"></div>
<span class="t" style="left:534.40px;top:409.52px;letter-spacing:-0.717px;color:#fff">10.000</span>
<span class="t" style="left:626.20px;top:409.52px;letter-spacing:-0.585px">-6.666</span>
<span class="t" style="left:715.80px;top:409.52px;letter-spacing:-0.585px">-3.500</span>
<div class="r" style="left:1px;top:425px;width:59px;height:15px;background:#e1e1e1"></div>
<div class="r" style="left:801px;top:425px;width:105px;height:15px;background:#f8f8f3"></div>
<div class="r" style="left:61px;top:440px;width:845px;height:1px;background:#dedede"></div>
<span class="t" style="left:25.10px;top:425.52px;letter-spacing:-1.013px">24</span>
<div class="r" style="left:60px;top:121px;width:1px;height:320px;background:#dedede"></div>
<div class="r" style="left:141px;top:121px;width:1px;height:320px;background:#dedede"></div>
<div class="r" style="left:241px;top:121px;width:1px;height:320px;background:#dedede"></div>
<div class="r" style="left:385px;top:121px;width:1px;height:320px;background:#dedede"></div>
<div class="r" style="left:480px;top:121px;width:1px;height:320px;background:#dedede"></div>
<div class="r" style="left:570px;top:121px;width:1px;height:320px;background:#dedede"></div>
<div class="r" style="left:660px;top:121px;width:1px;height:320px;background:#dedede"></div>
<div class="r" style="left:750px;top:121px;width:1px;height:320px;background:#dedede"></div>
<div class="r" style="left:800px;top:121px;width:1px;height:320px;background:#dedede"></div>
<div class="r" style="left:906px;top:121px;width:1px;height:320px;background:#dedede"></div>
<div class="r" style="left:60px;top:79px;width:1px;height:10px;background:#f8f8f8"></div>
<div class="r" style="left:141px;top:79px;width:1px;height:10px;background:#f8f8f8"></div>
<div class="r" style="left:241px;top:79px;width:1px;height:10px;background:#f8f8f8"></div>
<div class="r" style="left:385px;top:79px;width:1px;height:10px;background:#f8f8f8"></div>
<div class="r" style="left:480px;top:79px;width:1px;height:10px;background:#f8f8f8"></div>
<div class="r" style="left:570px;top:79px;width:1px;height:10px;background:#f8f8f8"></div>
<div class="r" style="left:660px;top:79px;width:1px;height:10px;background:#f8f8f8"></div>
<div class="r" style="left:750px;top:79px;width:1px;height:10px;background:#f8f8f8"></div>
<div class="r" style="left:800px;top:79px;width:1px;height:10px;background:#f8f8f8"></div>
<div class="r" style="left:60px;top:79px;width:1px;height:42px;background:#f6f6f6"></div>
<div class="r" style="left:141px;top:89px;width:1px;height:32px;background:#cecece"></div>
<div class="r" style="left:241px;top:89px;width:1px;height:32px;background:#cecece"></div>
<div class="r" style="left:385px;top:89px;width:1px;height:32px;background:#cecece"></div>
<div class="r" style="left:480px;top:89px;width:1px;height:32px;background:#cecece"></div>
<div class="r" style="left:750px;top:89px;width:1px;height:32px;background:#cecece"></div>
<div class="r" style="left:800px;top:89px;width:1px;height:32px;background:#cecece"></div>
<div class="r" style="left:906px;top:89px;width:1px;height:32px;background:#cecece"></div>
<div class="r" style="left:570px;top:105px;width:1px;height:16px;background:#cecece"></div>
<div class="r" style="left:660px;top:105px;width:1px;height:16px;background:#cecece"></div>
<div class="r" style="left:1px;top:88px;width:906px;height:1px;background:#f8f8f8"></div>
<div class="r" style="left:1px;top:120px;width:59px;height:1px;background:#f6f6f6"></div>
<div class="r" style="left:61px;top:120px;width:846px;height:1px;background:#d4d4d4"></div>
<div class="r" style="left:1px;top:136px;width:59px;height:1px;background:#f6f6f6"></div>
<div class="r" style="left:1px;top:152px;width:59px;height:1px;background:#f6f6f6"></div>
<div class="r" style="left:1px;top:168px;width:59px;height:1px;background:#f6f6f6"></div>
<div class="r" style="left:1px;top:184px;width:59px;height:1px;background:#f6f6f6"></div>
<div class="r" style="left:1px;top:200px;width:59px;height:1px;background:#f6f6f6"></div>
<div class="r" style="left:1px;top:216px;width:59px;height:1px;background:#f6f6f6"></div>
<div class="r" style="left:1px;top:232px;width:59px;height:1px;background:#f6f6f6"></div>
<div class="r" style="left:1px;top:248px;width:59px;height:1px;background:#f6f6f6"></div>
<div class="r" style="left:1px;top:264px;width:59px;height:1px;background:#f6f6f6"></div>
<div class="r" style="left:1px;top:280px;width:59px;height:1px;background:#f6f6f6"></div>
<div class="r" style="left:1px;top:296px;width:59px;height:1px;background:#f6f6f6"></div>
<div class="r" style="left:1px;top:312px;width:59px;height:1px;background:#f6f6f6"></div>
<div class="r" style="left:1px;top:328px;width:59px;height:1px;background:#f6f6f6"></div>
<div class="r" style="left:1px;top:344px;width:59px;height:1px;background:#f6f6f6"></div>
<div class="r" style="left:1px;top:360px;width:59px;height:1px;background:#f6f6f6"></div>
<div class="r" style="left:1px;top:376px;width:59px;height:1px;background:#f6f6f6"></div>
<div class="r" style="left:1px;top:392px;width:59px;height:1px;background:#f6f6f6"></div>
<div class="r" style="left:1px;top:408px;width:59px;height:1px;background:#f6f6f6"></div>
<div class="r" style="left:1px;top:424px;width:59px;height:1px;background:#f6f6f6"></div>
<div class="r" style="left:1px;top:440px;width:59px;height:1px;background:#f6f6f6"></div>
<div class="r" style="left:60px;top:121px;width:1px;height:320px;background:#f6f6f6"></div>
<div class="r" style="left:907px;top:79px;width:1px;height:362px;background:#fdfdfd"></div>
<div class="r" style="left:908px;top:79px;width:15px;height:362px;background:#f0f0f0"></div>
<div class="r" style="left:923px;top:79px;width:1px;height:362px;background:#f8f8f8"></div>
<div class="r" style="left:908px;top:145px;width:15px;height:242px;background:#cdcdcd"></div>
<svg class="r" style="left:910px;top:84px" width="11" height="8" viewBox="0 0 11 8"><path d="M2.5 6.0 L5.7 2.4 L8.9 6.0" stroke="#505050" stroke-width="1.7" fill="none"/></svg>
<svg class="r" style="left:910px;top:429px" width="11" height="8" viewBox="0 0 11 8"><path d="M2.5 1.9 L5.7 5.5 L8.9 1.9" stroke="#505050" stroke-width="1.7" fill="none"/></svg>
<div class="r" style="left:924px;top:79px;width:1px;height:362px;background:#d4d4e0"></div>
<div class="r" style="left:0px;top:441px;width:925px;height:1px;background:#c8c8d8"></div>
<div class="r" style="left:0px;top:442px;width:925px;height:22px;background:#f8f8f8"></div>
<div class="r" style="left:130px;top:441px;width:68px;height:21px;background:#eeeeee;border:1px solid #c8c8d8;box-sizing:border-box"></div>
<div class="r" style="left:198px;top:441px;width:61px;height:21px;background:#eeeeee;border:1px solid #c8c8d8;box-sizing:border-box"></div>
<div class="r" style="left:259px;top:441px;width:70px;height:21px;background:#eeeeee;border:1px solid #c8c8d8;box-sizing:border-box"></div>
<div class="r" style="left:391px;top:441px;width:60px;height:21px;background:#eeeeee;border:1px solid #c8c8d8;box-sizing:border-box"></div>
<div class="r" style="left:451px;top:441px;width:61px;height:21px;background:#eeeeee;border:1px solid #c8c8d8;box-sizing:border-box"></div>
<div class="r" style="left:512px;top:441px;width:61px;height:21px;background:#eeeeee;border:1px solid #c8c8d8;box-sizing:border-box"></div>
<div class="r" style="left:573px;top:441px;width:73px;height:21px;background:#eeeeee;border:1px solid #c8c8d8;box-sizing:border-box"></div>
<div class="r" style="left:646px;top:441px;width:61px;height:21px;background:#eeeeee;border:1px solid #c8c8d8;box-sizing:border-box"></div>
<div class="r" style="left:707px;top:441px;width:120px;height:21px;background:#eeeeee;border:1px solid #c8c8d8;box-sizing:border-box"></div>
<div class="r" style="left:827px;top:441px;width:104px;height:21px;background:#eeeeee;border:1px solid #c8c8d8;box-sizing:border-box"></div>
<div class="r" style="left:328px;top:441px;width:63px;height:23px;background:#fff;border:1px solid #c8c8d8;border-top:1px solid #e9e9e9;box-sizing:border-box"></div>
<span class="t" style="left:45.50px;top:445.52px;letter-spacing:-0.412px;word-spacing:0.412px">4 sur 13</span>
<svg class="r" style="left:4px;top:448px" width="8" height="9" viewBox="0 0 8 9"><rect x="1" y="1" width="1.6" height="7" fill="#555"/><path d="M7 1 L3 4.5 L7 8 Z" fill="#555"/></svg>
<svg class="r" style="left:22px;top:448px" width="7" height="9" viewBox="0 0 7 9"><path d="M6 1 L1.5 4.5 L6 8 Z" fill="#555"/></svg>
<svg class="r" style="left:101px;top:448px" width="7" height="9" viewBox="0 0 7 9"><path d="M1 1 L5.5 4.5 L1 8 Z" fill="#555"/></svg>
<svg class="r" style="left:117px;top:448px" width="8" height="9" viewBox="0 0 8 9"><path d="M1 1 L5 4.5 L1 8 Z" fill="#555"/><rect x="5.4" y="1" width="1.6" height="7" fill="#555"/></svg>
<span class="t" style="left:139.00px;top:445.32px;letter-spacing:0.062px">Matériaux</span>
<span class="t" style="left:207.50px;top:445.32px;letter-spacing:-0.375px">Sections</span>
<span class="t" style="left:267.20px;top:445.32px;letter-spacing:-0.408px">Épaisseurs</span>
<span class="t" style="left:404.80px;top:445.32px;letter-spacing:-0.495px">Lignes</span>
<span class="t" style="left:466.80px;top:445.32px;letter-spacing:-0.855px">Barres</span>
<span class="t" style="left:521.80px;top:445.32px;letter-spacing:-0.568px">Surfaces</span>
<span class="t" style="left:581.50px;top:445.32px;letter-spacing:-0.108px">Ouvertures</span>
<span class="t" style="left:658.50px;top:445.32px;letter-spacing:-0.298px">Solides</span>
<span class="t" style="left:715.60px;top:445.32px;letter-spacing:-0.208px;word-spacing:0.208px">Ensembles de lignes</span>
<span class="t" style="left:341.40px;top:447.02px;letter-spacing:-0.472px">Nœuds</span>
<div class="r" style="left:0;top:0;width:894.4px;height:464px;overflow:hidden">
<span class="t" style="left:835.50px;top:445.32px;letter-spacing:-0.355px;word-spacing:0.355px">Ensembles de barres</span>
</div>
<div class="r" style="left:895px;top:442px;width:30px;height:19px;background:#eeeeee"></div>
<svg class="r" style="left:898px;top:444px" width="9" height="13" viewBox="0 0 9 13"><path d="M7.6 1.8 L7.6 12 L1.8 6.9 Z" fill="#fff"/><path d="M7 1 L7 11.2 L1 6.1 Z" fill="#a0a0a0"/></svg>
<svg class="r" style="left:913px;top:444px" width="9" height="13" viewBox="0 0 9 13"><path d="M1 0.8 L1 11.6 L7.4 6.2 Z" fill="#000"/></svg>
</body></html>
